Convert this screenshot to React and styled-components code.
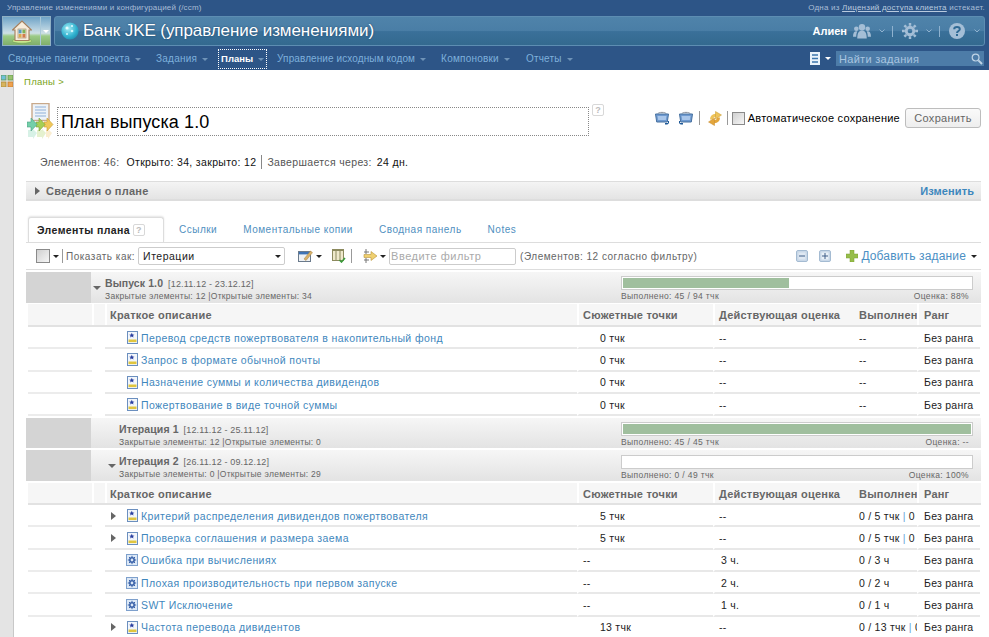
import React from "react";
import styled, { createGlobalStyle } from "styled-components";

const Global = createGlobalStyle`
  html, body { margin: 0; padding: 0; background: #fff; }
  body { width: 989px; height: 637px; overflow: hidden; font-family: "Liberation Sans", Arial, sans-serif; }
  * { box-sizing: border-box; }
`;

const Page = styled.div`display: flex; flex-direction: column; width: 989px; height: 637px; overflow: hidden;`;
const TopBar = styled.div`
  height: 16px; flex: none; background: #2d5587; color: #a9bdd6; font-size: 8px; letter-spacing: .16px;
  display: flex; justify-content: space-between; align-items: center; padding: 0 4px 1px 7px;
  u { color: #b9cadf; }
  span + span { letter-spacing: .22px; }
`;
const TitleBar = styled.div`height: 31px; flex: none; background: #2d5587; display: flex; gap: 3px; padding: 0 4px 1px 2px;`;
const HomeButton = styled.div`
  width: 49px; height: 30px; flex: none; display: flex; align-items: center; padding: 0 0 0 9px;
  background: linear-gradient(#6fa3c6 0%, #a9c9dc 35%, #cfe0e6 58%, #9ccb86 68%, #7fae6a 100%); border: 1px solid #8fb0c4;
`;
const HomeSplit = styled.span`
  margin-left: 8px; width: 12px; height: 100%; border-left: 1px solid #a9c8d8; display: flex; align-items: center; justify-content: center;
`;
const ProjectPanel = styled.div`
  flex: 1; display: flex; align-items: center; padding: 0 4px 0 6px; border: 1px solid #5d8db2; border-radius: 3px;
  background: linear-gradient(#4f83aa 0%, #4a7ea6 48%, #3a7099 52%, #33698f 100%);
`;
const ProjectName = styled.div`color: #fff; font-size: 17px; letter-spacing: -.08px; text-shadow: 0 0 2px #1c4468; flex: 1; white-space: nowrap; margin-left: 4px;`;
const UserName = styled.span`color: #fff; font-size: 11px; font-weight: bold; margin-right: 6px;`;
const HeadSep = styled.span`width: 1px; height: 11px; background: #8fb2cf; margin: 0 9px 0 7px;`;
const NavBar = styled.div`
  height: 23px; flex: none; background: #2d5587; display: flex; align-items: center; padding: 0 5px 0 8px; position: relative;
`;
const NavItem = styled.a`
  display: flex; align-items: center; height: 18px; font-size: ${p => (p.$active ? "9.5px" : "10px")}; letter-spacing: ${p => (p.$active ? "0" : p.$ls || ".22px")}; white-space: nowrap;
  color: ${p => (p.$active ? "#fff" : "#7db0dc")}; font-weight: ${p => (p.$active ? "bold" : "normal")};
  outline: ${p => (p.$active ? "1px dotted #fff" : "none")};
  margin-left: ${p => p.$ml || 0}px;
  padding: ${p => (p.$active ? "0 2px" : "0")};
`;
const NavCaret = styled.span`
  width: 0; height: 0; margin-left: 5px; margin-top: 1px; border: 3px solid transparent; border-top-color: #6f93b8; border-bottom: 0;
`;
const NavRight = styled.div`margin-left: auto; display: flex; align-items: center;`;
const WhiteCaret = styled.span`width: 0; height: 0; margin: 0 5px; border: 3px solid transparent; border-top-color: #fff; border-bottom: 0;`;
const Search = styled.div`
  width: 148px; height: 15px; background: #4d7ca8; color: #a9c5e0; font-size: 11px; letter-spacing: .3px;
  display: flex; align-items: center; justify-content: space-between; padding: 0 1px 0 3px;
`;

const Content = styled.div`flex: 1; display: flex; min-height: 0;`;
const Rail = styled.div`width: 14px; flex: none; background: #e4e4e4; border-right: 1px solid #c8c8c8; padding: 5px 0 0 1px; position: relative;`;
const Main = styled.div`flex: 1; padding: 0 8px 0 12px; min-width: 0;`;
const Breadcrumb = styled.div`color: #7aa421; font-size: 9.5px; letter-spacing: .3px; height: 33px; padding: 6px 0 0 0; margin-left: -2px;`;

const TitleRow = styled.div`display: flex; align-items: flex-start; height: 49px; padding-left: 1px;`;
const TitleInput = styled.div`
  width: 532px; height: 29px; margin: 4px 0 0 3px; border: 1px dotted #888; font-size: 18px; color: #000;
  padding: 4px 0 0 3px; letter-spacing: .1px;
`;
const HelpBox = styled.span`
  width: 12px; height: 12px; border: 1px solid #d8d8d8; border-radius: 2px; color: #bbb; font-size: 9px; font-weight: bold;
  display: inline-flex; align-items: center; justify-content: center; flex: none;
  margin: ${p => p.$m || 0};
`;
const TitleActions = styled.div`margin-left: auto; display: flex; align-items: center; height: 20px; margin-top: 5px;`;
const VSep = styled.span`width: 1px; height: ${p => p.$h || 14}px; background: ${p => p.$c || "#999"}; flex: none; margin: ${p => p.$m || "0 4px"};`;
const AutoSave = styled.span`font-size: 11px; color: #000; letter-spacing: .25px; margin: 0 5px 0 3px; white-space: nowrap;`;
const Check = styled.span`
  width: ${p => p.$s || 13}px; height: ${p => p.$s || 13}px; flex: none; border: 1px solid #8a8a8a; background: linear-gradient(135deg, #d0d0d0, #f6f6f6);
`;
const SaveButton = styled.div`
  width: 76px; height: 20px; border: 1px solid #bdbdbd; border-radius: 3px; background: linear-gradient(#fafafa, #eee);
  font-size: 11px; letter-spacing: .3px; color: #666; display: flex; align-items: center; justify-content: center;
`;

const Stats = styled.div`
  height: 20px; padding-left: 14px; font-size: 10.5px; letter-spacing: .35px; color: #555; display: flex; align-items: center; white-space: nowrap;
  b { font-weight: normal; color: #111; margin: 0 0 0 7px; }
`;
const InfoBar = styled.div`
  margin-top: 9px; height: 20px; display: flex; align-items: center; justify-content: space-between; padding: 0 7px 0 9px;
  border-top: 1px solid #ddd; border-bottom: 2px solid #ddd; background: linear-gradient(#f4f4f4, #e4e4e4);
`;
const InfoTitle = styled.div`display: flex; align-items: center; gap: 6px; font-size: 11px; font-weight: bold; color: #666; letter-spacing: .22px;`;
const InfoLink = styled.a`font-size: 11px; font-weight: bold; color: #3d87bd; letter-spacing: .1px;`;
const Twisty = styled.span`
  width: 0; height: 0; flex: none; border-style: solid; border-color: transparent; 
  ${p => p.$down
    ? "border-width: 4px 4px 0 4px; border-top-color: #666;"
    : "border-width: 4px 0 4px 5px; border-left-color: #666;"}
`;

const Tabs = styled.div`
  margin-top: 16px; height: 26px; display: flex; align-items: flex-end; border-bottom: 1px solid #ddd; padding-left: 2px;
`;
const ActiveTab = styled.div`
  width: 136px; height: 25px; border: 1px solid #ddd; border-bottom: 0; border-radius: 3px 3px 0 0; background: #fff;
  box-shadow: 0 -1px 2px #e4e4e4; display: flex; align-items: center; gap: 3px; padding: 0 0 0 8px; font-size: 10.5px; color: #222; letter-spacing: .4px; font-weight: bold; white-space: nowrap;
`;
const Tab = styled.a`
  height: 25px; display: flex; align-items: center; font-size: 10px; color: #4f8fc0; letter-spacing: .5px; white-space: nowrap;
  margin-left: ${p => p.$ml}px;
`;

const Toolbar = styled.div`
  height: 27px; display: flex; align-items: center; padding: 0 4px 0 10px; border-bottom: 1px solid #ddd; font-size: 10.5px; color: #666; white-space: nowrap;
`;
const BlackCaret = styled.span`width: 0; height: 0; flex: none; margin: ${p => p.$m || "0 0 0 3px"}; border: 3px solid transparent; border-top-color: #222; border-bottom: 0;`;
const Label = styled.span`letter-spacing: .5px; font-size: 10px; color: #666; margin: ${p => p.$m || 0};`;
const Select = styled.div`
  width: 147px; height: 18px; border: 1px solid #ccc; border-radius: 2px; margin-left: 3px; display: flex; align-items: center; justify-content: space-between;
  padding: 0 3px 0 4px; font-size: 10.5px; color: #222; letter-spacing: .5px;
`;
const FilterInput = styled.div`
  width: 127px; height: 17px; border: 1px solid #ccc; border-radius: 2px; color: #aaa; font-size: 11px; letter-spacing: .5px; margin-left: 3px; padding: 1px 0 0 1px;
`;
const AddLink = styled.a`font-size: 12px; color: #4b8fc4; letter-spacing: .15px; margin-left: 3px;`;
const ToolRight = styled.div`margin-left: auto; display: flex; align-items: center;`;
const ToolGap = styled.span`width: ${p => p.$w}px; flex: none;`;

const Group = styled.div`
  margin-top: ${p => p.$mt}px; height: ${p => p.$h}px; display: grid; grid-template-columns: 65px 530px 352px; background: linear-gradient(#f6f6f6, #e3e3e3);
`;
const GroupSide = styled.div`background: #d4d4d4;`;
const GroupInfo = styled.div`
  padding-left: ${p => (p.$twisty ? "0" : "28px")}; display: flex; align-items: flex-start; position: relative;
`;
const GroupText = styled.div`padding: 5px 0 0 ${p => p.$pl}px;`;
const GroupName = styled.div`
  font-size: 10.5px; font-weight: bold; color: #666; line-height: 13px; white-space: nowrap; letter-spacing: .1px;
  span { font-weight: normal; font-size: 9px; letter-spacing: .15px; margin-left: 5px; color: #666; }
`;
const GroupMeta = styled.div`font-size: 8.5px; color: #666; letter-spacing: .28px; line-height: 11px; white-space: nowrap;`;
const GroupProgress = styled.div`padding-top: ${p => p.$pt}px;`;
const Bar = styled.div`width: 352px; height: 14px; background: #fff; border: 1px solid #ccc; padding: 1px;`;
const BarFill = styled.div`height: 100%; background: #a0bf9e;`;
const BarLabels = styled.div`
  display: flex; justify-content: space-between; font-size: 8.5px; color: #666; letter-spacing: .37px; line-height: 11px; padding: 1px 4px 0 0; 
`;

const HeadRow = styled.div`
  height: ${p => p.$h}px; margin: ${p => p.$mt}px 0 0 2px; display: grid; grid-template-columns: 64px 13px 472px 136px 142px 62px 63px; background: #f6f6f6; border-bottom: 2px solid #e2e2e2;
`;
const HeadCell = styled.div`
  font-size: 11px; font-weight: bold; color: #666; letter-spacing: .22px; display: flex; align-items: center; white-space: nowrap; overflow: hidden;
  padding-left: ${p => p.$pl || 5}px; padding-top: 1px;
  border-left: ${p => (p.$div ? "2px solid #fff" : "0")};
`;
const Row = styled.div`
  height: 22.3px; margin-left: 2px; display: grid; grid-template-columns: 64px 13px 472px 136px 142px 62px 63px; 
`;
const Cell = styled.div`
  border-bottom: 2px solid #e8e8e8; display: flex; align-items: center; font-size: 10.5px; color: #222; letter-spacing: .25px; white-space: nowrap; overflow: hidden;
  padding-left: ${p => p.$pl || 0}px; border-left: ${p => (p.$div ? "2px solid #fff" : "0")};
  padding-top: 1px;
`;
const Spacer = styled.div`border-bottom: 2px solid ${p => p.$plain ? "#fff" : "#ececec"};`;
const Summary = styled.a`color: #3f87bd; font-size: 10.5px; letter-spacing: .41px; margin-left: 3px; white-space: nowrap;`;
const TwistSlot = styled.span`width: 19px; flex: none; display: flex; padding-left: 3px;`;
const Rule = styled.i`font-style: normal; color: #6aa6d6;`;
const TwistSlotGroup = styled.span`margin: 14px 0 0 ${p => p.$ml}px; display: flex; flex: none;`;
const SvgBox = styled.svg`flex: none; display: block; margin-left: ${p => p.$ml || 0}px;`;

const House = () => (
  <SvgBox width="20" height="25" viewBox="0 0 20 25">
    <ellipse cx="10" cy="22" rx="10" ry="2.2" fill="#c9e88f" stroke="#6f9f4f" strokeWidth=".6" />
    <path d="M0.5 11 L10 2 L19.5 11 L17 11 L17 21.5 L3 21.5 L3 11 Z" fill="#f7eddc" stroke="#a67f5c" strokeWidth="1.1" />
    <rect x="6" y="10" width="8" height="9" fill="#f6f0e4" stroke="#9b8468" strokeWidth=".6" />
    <rect x="6.6" y="10.6" width="3" height="3.8" fill="#5b9bbd" /><rect x="10.4" y="10.6" width="3" height="3.8" fill="#7fb257" />
    <rect x="6.6" y="15" width="3" height="3.6" fill="#d8a94e" /><rect x="10.4" y="15" width="3" height="3.6" fill="#d27a4c" />
  </SvgBox>
);
const Globe = () => (
  <SvgBox width="18" height="18" viewBox="0 0 18 18">
    <defs><radialGradient id="gl" cx=".4" cy=".35" r=".8"><stop offset="0" stopColor="#a5ecf5" /><stop offset=".6" stopColor="#2fb1cf" /><stop offset="1" stopColor="#1b7fa0" /></radialGradient></defs>
    <circle cx="9" cy="9" r="8.6" fill="url(#gl)" />
    <circle cx="6" cy="6" r="1.5" fill="#e4fbff" /><circle cx="11" cy="4" r="1" fill="#e4fbff" /><circle cx="11" cy="9" r="1.3" fill="#d0f6fb" /><circle cx="6" cy="12" r="1" fill="#d0f6fb" />
  </SvgBox>
);
const Users = () => (
  <SvgBox width="18" height="17" viewBox="0 0 19 17" fill="#a4bed6">
    <circle cx="9.5" cy="4" r="3.4" /><path d="M4.5 16 C4.5 9.5 6.5 7.5 9.5 7.5 S14.5 9.5 14.5 16Z" />
    <circle cx="3.5" cy="5.5" r="2.4" /><path d="M0 14 C0 10 1.4 8.3 3.5 8.3 L4.6 8.6 C3.8 10 3.4 12 3.4 14Z" />
    <circle cx="15.5" cy="5.5" r="2.4" /><path d="M19 14 C19 10 17.6 8.3 15.5 8.3 L14.4 8.6 C15.2 10 15.6 12 15.6 14Z" />
  </SvgBox>
);
const Gear = () => (
  <SvgBox width="16" height="16" viewBox="0 0 17 17" fill="none" stroke="#a4bed6">
    <circle cx="8.5" cy="8.5" r="4" strokeWidth="3" />
    <path d="M8.5 0v3M8.5 14v3M0 8.5h3M14 8.5h3M2.5 2.5l2 2M12.5 12.5l2 2M14.5 2.5l-2 2M4.5 12.5l-2 2" strokeWidth="2.6" />
  </SvgBox>
);
const Help = () => (
  <SvgBox width="16" height="16" viewBox="0 0 16 16">
    <circle cx="8" cy="8" r="8" fill="#a4bed6" />
    <path d="M5.2 6.2 C5.2 3.2 10.8 3.2 10.8 6.2 C10.8 8 8 8 8 10" fill="none" stroke="#2f6a95" strokeWidth="2" />
    <rect x="7" y="11" width="2" height="2" fill="#2f6a95" />
  </SvgBox>
);
const Chevron = ({ ml }) => (
  <SvgBox width="6" height="4" viewBox="0 0 6 4" $ml={ml}>
    <path d="M.5 .5L3 3L5.5 .5" fill="none" stroke="#8fb2cf" />
  </SvgBox>
);
const ListIcon = () => (
  <SvgBox width="10" height="13" viewBox="0 0 10 13">
    <rect width="10" height="13" fill="#e8f2fb" /><path d="M2 3h6M2 6.5h6M2 10h6" stroke="#3b76ad" strokeWidth="1.6" />
  </SvgBox>
);
const Magnifier = () => (
  <SvgBox width="12" height="12" viewBox="0 0 12 12" fill="none">
    <circle cx="4.6" cy="4.6" r="3.4" stroke="#c0d4e6" strokeWidth="1.2" /><path d="M7.4 7.4L11 11" stroke="#c0d4e6" strokeWidth="2" />
  </SvgBox>
);
const DashIcon = () => (
  <SvgBox width="12" height="12" viewBox="0 0 12 12">
    <rect x="0" y="0" width="5" height="5" fill="#6fc0d8" stroke="#5e9a4d" strokeWidth=".8" /><rect x="7" y="0" width="5" height="5" fill="#9ac26f" stroke="#5e9a4d" strokeWidth=".8" />
    <rect x="0" y="7" width="5" height="5" fill="#d8b45e" stroke="#a98a3a" strokeWidth=".8" /><rect x="7" y="7" width="5" height="5" fill="#efa14f" stroke="#c47f2e" strokeWidth=".8" />
  </SvgBox>
);
const PlanIcon = () => (
  <SvgBox width="27" height="37" viewBox="0 0 27 37">
    <rect x="5" y="0.5" width="17" height="17" fill="#eef3f8" stroke="#c9a98a" strokeWidth="1.4" />
    <path d="M8 4h11M8 7h11M8 10h11M8 13h11" stroke="#8fb0d8" />
    <g opacity=".28">
      <path d="M1 27h5v-1l4 4-4 6v-2H1z" fill="#74cfa9" /><path d="M10 27h5v-1l4 4-4 6v-2h-5z" fill="#a6cf55" /><path d="M19 27h2v-1l4 4-4 6v-2h-2z" fill="#eec25a" />
    </g>
    <path d="M17 19h3v-4l6 6.5-6 6.5v-4h-3z" fill="#f0c75a" stroke="#c9a035" strokeWidth=".6" />
    <path d="M9 19h3v-4l6 6.5-6 6.5v-4H9z" fill="#a6cf55" stroke="#77a03a" strokeWidth=".6" />
    <path d="M0 19h4v-4l6 6.5-6 6.5v-4H0z" fill="#74cfa9" stroke="#4a9f85" strokeWidth=".6" />
  </SvgBox>
);
const Folder = ({ flip, ml }) => (
  <SvgBox width="14" height="14" viewBox="0 0 14 14" $ml={ml}>
    <path d="M3 2.5C3 1 11 1 11 2.5" fill="none" stroke="#8a8f99" />
    <path d="M.5 3h13l-1.2 8H1.7z" fill="#6f9ad0" stroke="#46709f" />
    <path d="M2.5 5h9l-.7 4H3.2z" fill="#a9c6ea" />
    <path d={flip ? "M0 12h4v1.6H1.6z M0 10v3h1v-3z" : "M14 12h-4v1.6h2.4z M14 10v3h-1v-3z"} fill="#1f5a98" />
  </SvgBox>
);
const SyncIcon = () => (
  <SvgBox width="14" height="15" viewBox="0 0 14 15">
    <path d="M3.5 8.500C3.500 6 5.500 4.500 8 4.200" fill="none" stroke="#eec35a" strokeWidth="3" />
    <path d="M7.500 .5L13.500 4 7.500 8z" fill="#eec35a" stroke="#c4982f" strokeWidth=".5" />
    <path d="M10.500 6.500C10.500 9 8.500 10.500 6 10.800" fill="none" stroke="#e3a63c" strokeWidth="3" />
    <path d="M6.500 14.500L.5 11 6.500 7z" fill="#e3a63c" stroke="#c4882f" strokeWidth=".5" />
  </SvgBox>
);
const ColumnsIcon = () => (
  <SvgBox width="14" height="14" viewBox="0 0 14 14">
    <rect x=".5" y=".5" width="11" height="11" fill="#efe9cc" stroke="#8c8a5e" /><path d="M4 1v10M8 1v10" stroke="#8c8a5e" /><path d="M1 1.5h10" stroke="#8c8a5e" />
    <path d="M7.5 11l2 2 3.500-4" fill="none" stroke="#3b9a3b" strokeWidth="1.6" />
  </SvgBox>
);
const EditIcon = () => (
  <SvgBox width="15" height="13" viewBox="0 0 15 13">
    <rect x=".5" y="1.5" width="12" height="10" fill="#eef1f4" stroke="#6a7a8c" /><rect x="1" y="2" width="11" height="2.4" fill="#3f73b5" />
    <path d="M6 9l6.500-8 2 1.600L8 10.500z" fill="#d9b26a" stroke="#a9823f" strokeWidth=".5" />
  </SvgBox>
);
const FilterIcon = () => (
  <SvgBox width="15" height="14" viewBox="0 0 15 14">
    <path d="M1 3h5M1 11h5M3 0v5M3 9v5" stroke="#777" fill="none" />
    <path d="M1 5.500h7V2.500L14 7l-6 4.500v-3H1z" fill="#efd070" stroke="#b9933a" strokeWidth=".6" />
  </SvgBox>
);
const TreeIcon = ({ plus }) => (
  <SvgBox width="12" height="12" viewBox="0 0 12 12" $ml={plus ? 11 : 0}>
    <rect x=".5" y=".5" width="11" height="11" rx="1.500" fill="#c9d8e8" stroke="#a4bbd2" />
    <rect x="2.500" y="2.500" width="7" height="7" fill={plus ? "#eaf1f8" : "#dfe8f2"} />
    <path d={plus ? "M3 6h6M6 3v6" : "M3 6h6"} stroke="#3f5f88" strokeWidth="1" />
  </SvgBox>
);
const PlusIcon = () => (
  <SvgBox width="12" height="12" viewBox="0 0 12 12" $ml={15}>
    <path d="M4 0h4v4h4v4H8v4H4V8H0V4h4z" fill="#96bd4a" stroke="#789c33" strokeWidth=".5" />
  </SvgBox>
);
const StoryIcon = () => (
  <SvgBox width="11" height="13" viewBox="0 0 11 13">
    <rect x=".5" y=".5" width="10" height="12" fill="#f2f6fb" stroke="#6b8fbf" />
    <rect x="1.500" y="8.500" width="8" height="2.600" fill="#e0c53e" />
    <path d="M4.800 1.800l.8 1.800 1.800.1-1.400 1.100.5 1.800-1.700-1-1.700 1 .5-1.800-1.400-1.100 1.800-.1z" fill="#2a3fa0" />
  </SvgBox>
);
const DefectIcon = () => (
  <SvgBox width="12" height="12" viewBox="0 0 12 12" $ml={-1}>
    <rect x=".5" y=".5" width="11" height="11" fill="#dce8f6" stroke="#7ea0cc" />
    <circle cx="6" cy="6" r="2.200" fill="none" stroke="#3860a8" strokeWidth="1.600" />
    <path d="M6 1.800v1.400M6 8.800v1.400M1.800 6h1.400M8.800 6h1.400M3 3l1 1M8 8l1 1M9 3L8 4M4 8L3 9" stroke="#3860a8" />
  </SvgBox>
);

const GroupBlock = ({ mt, h, name, range, meta, done, est, pct, pl, twisty, pt }) => (
  <Group $mt={mt} $h={h}>
    <GroupSide />
    <GroupInfo $twisty={twisty}>
      {twisty && <TwistSlotGroup $ml={twisty}><Twisty $down /></TwistSlotGroup>}
      <GroupText $pl={pl}>
        <GroupName>{name}<span>{range}</span></GroupName>
        <GroupMeta>{meta}</GroupMeta>
      </GroupText>
    </GroupInfo>
    <GroupProgress $pt={pt}>
      <Bar><BarFill style={{ width: `${pct}%` }} /></Bar>
      <BarLabels><span>{done}</span><span>{est}</span></BarLabels>
    </GroupProgress>
  </Group>
);

const Header = ({ h, mt }) => (
  <HeadRow $h={h} $mt={mt}>
    <HeadCell />
    <HeadCell $div />
    <HeadCell $div $pl={3}>Краткое описание</HeadCell>
    <HeadCell $div $pl={4}>Сюжетные точки</HeadCell>
    <HeadCell $div $pl={4}>Действующая оценка</HeadCell>
    <HeadCell $pl={4}>Выполнен</HeadCell>
    <HeadCell $div $pl={5}>Ранг</HeadCell>
  </HeadRow>
);

const ItemRow = ({ title, type = "story", twist, pts, est, done }) => (
  <Row>
    <Spacer />
    <Spacer $plain />
    <Cell $pl={3}>
      <TwistSlot>{twist && <Twisty />}</TwistSlot>
      {type === "story" ? <StoryIcon /> : <DefectIcon />}
      <Summary>{title}</Summary>
    </Cell>
    <Cell $div $pl={pts === "--" ? 4 : 21}>{pts}</Cell>
    <Cell $div $pl={est === "--" ? 4 : 6}>{est}</Cell>
    <Cell $pl={4}><span>{done}</span></Cell>
    <Cell $div $pl={5}>Без ранга</Cell>
  </Row>
);

export default function App() {
  return (
    <Page>
      <Global />
      <TopBar>
        <span>Управление изменениями и конфигурацией (/ccm)</span>
        <span>Одна из <u>Лицензий доступа клиента</u> истекает.</span>
      </TopBar>
      <TitleBar>
        <HomeButton><House /><HomeSplit><WhiteCaret style={{ margin: 0 }} /></HomeSplit></HomeButton>
        <ProjectPanel>
          <Globe />
          <ProjectName>Банк JKE (управление изменениями)</ProjectName>
          <UserName>Алиен</UserName>
          <Users /><Chevron ml={8} /><HeadSep />
          <Gear /><Chevron ml={8} /><HeadSep />
          <Help /><Chevron ml={9} />
        </ProjectPanel>
      </TitleBar>
      <NavBar>
        <NavItem>Сводные панели проекта<NavCaret /></NavItem>
        <NavItem $ml={15}>Задания<NavCaret /></NavItem>
        <NavItem $ml={11} $active>Планы<NavCaret /></NavItem>
        <NavItem $ml={11} $ls=".1px">Управление исходным кодом<NavCaret /></NavItem>
        <NavItem $ml={15}>Компоновки<NavCaret /></NavItem>
        <NavItem $ml={16}>Отчеты<NavCaret /></NavItem>
        <NavRight><ListIcon /><WhiteCaret /><Search>Найти задания<Magnifier /></Search></NavRight>
      </NavBar>
      <Content>
        <Rail><DashIcon /></Rail>
        <Main>
          <Breadcrumb>Планы &gt;</Breadcrumb>
          <TitleRow>
            <PlanIcon />
            <TitleInput>План выпуска 1.0</TitleInput>
            <HelpBox $m="1px 0 0 3px">?</HelpBox>
            <TitleActions>
              <Folder /><Folder flip ml={10} />
              <VSep $m="0 8px 0 6px" />
              <SyncIcon />
              <VSep $m="0 4px 0 5px" />
              <Check />
              <AutoSave>Автоматическое сохранение</AutoSave>
              <SaveButton>Сохранить</SaveButton>
            </TitleActions>
          </TitleRow>
          <Stats>
            Элементов: 46:<b>Открыто: 34, закрыто: 12</b><VSep $m="0 5px" $c="#888" />Завершается через:<b style={{ marginLeft: 5 }}>24 дн.</b>
          </Stats>
          <InfoBar>
            <InfoTitle><Twisty />Сведения о плане</InfoTitle>
            <InfoLink>Изменить</InfoLink>
          </InfoBar>
          <Tabs>
            <ActiveTab>Элементы плана <HelpBox>?</HelpBox></ActiveTab>
            <Tab $ml={15}>Ссылки</Tab>
            <Tab $ml={26}>Моментальные копии</Tab>
            <Tab $ml={26}>Сводная панель</Tab>
            <Tab $ml={26}>Notes</Tab>
          </Tabs>
          <Toolbar>
            <Check $s={14} /><BlackCaret />
            <VSep $m="0 3px 0 3px" $h={14} />
            <Label>Показать как:</Label>
            <Select>Итерации<BlackCaret /></Select>
            <ToolGap $w={13} />
            <EditIcon /><BlackCaret $m="0 0 0 3px" />
            <ToolGap $w={10} />
            <ColumnsIcon />
            <VSep $m="0 11px 0 5px" $h={14} />
            <FilterIcon /><BlackCaret $m="0 0 0 2px" />
            <FilterInput>Введите фильтр</FilterInput>
            <Label $m="0 0 0 4px">(Элементов: 12 согласно фильтру)</Label>
            <ToolRight>
              <TreeIcon /><TreeIcon plus /><PlusIcon />
              <AddLink>Добавить задание</AddLink>
              <BlackCaret $m="0 0 0 5px" />
            </ToolRight>
          </Toolbar>
          <GroupBlock mt={2} h={31} twisty={2} pl={4} pt={4} pct={47.6} name="Выпуск 1.0" range="[12.11.12 - 23.12.12]" meta="Закрытые элементы: 12 |Открытые элементы: 34" done="Выполнено: 45 / 94 тчк" est="Оценка: 88%" />
          <Header h={23} mt={1} />
          <ItemRow title="Перевод средств пожертвователя в накопительный фонд" pts="0 тчк" est="--" done="--" />
          <ItemRow title="Запрос в формате обычной почты" pts="0 тчк" est="--" done="--" />
          <ItemRow title="Назначение суммы и количества дивидендов" pts="0 тчк" est="--" done="--" />
          <ItemRow title="Пожертвование в виде точной суммы" pts="0 тчк" est="--" done="--" />
          <GroupBlock mt={2} h={30} pl={0} pt={4} pct={100} name="Итерация 1" range="[12.11.12 - 25.11.12]" meta="Закрытые элементы: 12 |Открытые элементы: 0" done="Выполнено: 45 / 45 тчк" est="Оценка: --" />
          <GroupBlock mt={2} h={31} twisty={17} pl={3} pt={5} pct={0} name="Итерация 2" range="[26.11.12 - 09.12.12]" meta="Закрытые элементы: 0 |Открытые элементы: 29" done="Выполнено: 0 / 49 тчк" est="Оценка: 100%" />
          <Header h={22} mt={2} />
          <ItemRow twist title="Критерий распределения дивидендов пожертвователя" pts="5 тчк" est="--" done={<>0 / 5 тчк <Rule>|</Rule> 0 ч</>} />
          <ItemRow twist title="Проверка соглашения и размера заема" pts="5 тчк" est="--" done={<>0 / 5 тчк <Rule>|</Rule> 0 ч</>} />
          <ItemRow type="defect" title="Ошибка при вычислениях" pts="--" est="3 ч." done="0 / 3 ч" />
          <ItemRow type="defect" title="Плохая производительность при первом запуске" pts="--" est="2 ч." done="0 / 2 ч" />
          <ItemRow type="defect" title="SWT Исключение" pts="--" est="1 ч." done="0 / 1 ч" />
          <ItemRow twist title="Частота перевода дивидентов" pts="13 тчк" est="--" done={<>0 / 13 тчк <Rule>|</Rule> 0 ч</>} />
        </Main>
      </Content>
    </Page>
  );
}
